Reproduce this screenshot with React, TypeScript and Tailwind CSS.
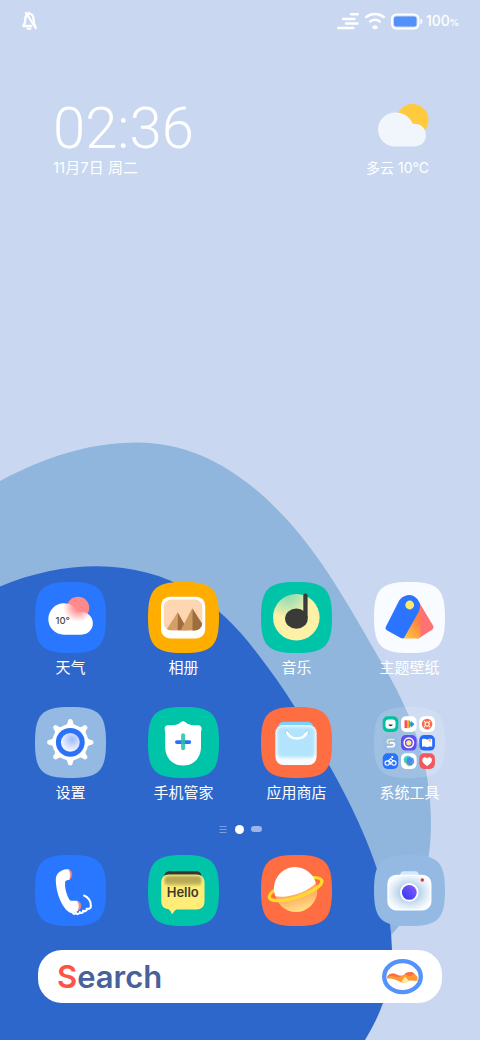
import type { ReactNode } from "react";

const SQUIRCLE = "M0 35.5C0 7 7 0 35.5 0S71 7 71 35.5 64 71 35.5 71 0 64 0 35.5Z";

function Tile({ fill, opacity = 1, children }: { fill: string; opacity?: number; children: ReactNode }) {
  return (
    <svg viewBox="0 0 71 71" className="block size-[71px]" aria-hidden="true">
      <path d={SQUIRCLE} fill={fill} fillOpacity={opacity} />
      {children}
    </svg>
  );
}

function WeatherIcon() {
  return (
    <Tile fill="#2977ff">
      <defs>
        <radialGradient id="w-glow" gradientUnits="userSpaceOnUse" cx="43" cy="25" r="15">
          <stop offset="0.3" stopColor="#ff9a9c" />
          <stop offset="0.75" stopColor="#ffdcdd" />
          <stop offset="1" stopColor="#ffffff" />
        </radialGradient>
      </defs>
      <circle cx="43" cy="26" r="11.2" fill="#ff8a8c" />
      <path d="M29 21.3c5.5 0 10.300 2.700 13.200 7.800 1.500.9 2.800.9 4.300.9a11.350 11.350 0 0 1 0 22.700H29a15.700 15.700 0 0 1 0-31.400Z" fill="url(#w-glow)" />
      <text x="20.500" y="41.500" fontSize="9.500" fontWeight="500" fill="#484848">10°</text>
    </Tile>
  );
}

function AlbumIcon() {
  return (
    <Tile fill="#ffae00">
      <defs>
        <clipPath id="al-clip"><rect x="15.700" y="17.500" width="38.600" height="31" rx="7.500" /></clipPath>
      </defs>
      <rect x="13" y="14.700" width="44.200" height="41.800" rx="9" fill="#fff" />
      <rect x="15.700" y="17.500" width="38.600" height="31" rx="7.500" fill="#ffd6b2" />
      <g clipPath="url(#al-clip)">
        <path d="M29.700 30.300 18 48.500h12Z" fill="#d3a06a" />
        <path d="M29.700 30.300 40 48.500H29.700Z" fill="#9d6d3b" />
        <path d="M44.300 26.300 32.500 48.500h12Z" fill="#cf9a60" />
        <path d="M44.300 26.300 57 46v3H44.300Z" fill="#9d6d3b" />
      </g>
    </Tile>
  );
}

function MusicIcon() {
  return (
    <Tile fill="#00c4a7">
      <defs>
        <radialGradient id="mu-g" gradientUnits="userSpaceOnUse" cx="27" cy="12" r="24">
          <stop offset="0" stopColor="#8adcb0" />
          <stop offset="0.450" stopColor="#b5e4b0" />
          <stop offset="1" stopColor="#fcf1a6" />
        </radialGradient>
      </defs>
      <circle cx="35.300" cy="35.300" r="23.300" fill="url(#mu-g)" />
      <ellipse cx="35.400" cy="36.600" rx="11.300" ry="10.200" fill="#3a3a38" />
      <path d="M42.300 13.700a2 2 0 0 1 4.300 0V36h-4.300Z" fill="#3a3a38" />
    </Tile>
  );
}

function ThemeIcon() {
  return (
    <Tile fill="#f8fbff">
      <defs>
        <linearGradient id="th-o" x1="0.800" y1="0" x2="0.200" y2="1">
          <stop offset="0.300" stopColor="#ff8145" />
          <stop offset="1" stopColor="#ffc23d" />
        </linearGradient>
      </defs>
      <path d="m45 20 14 23.500c1 1.800.5 3.300-1 4.200L46 55.600c-1 .7-2 .7-3 .7V22Z" fill="#fe7175" />
      <path d="M46.500 24v30.300c0 1.400-.8 2.200-2.200 2.200H29L39 32Z" fill="url(#th-o)" />
      <path d="M25.300 18.300a11.300 11.300 0 0 1 19.700 11L30.700 54.800c-.9 1.600-2.200 2-3.800 1.200l-13.700-7.600c-1.700-1-2.100-2.200-1.200-3.900Z" fill="#2b74ff" />
      <circle cx="35.700" cy="23" r="4.400" fill="#fde86a" />
    </Tile>
  );
}

function SettingsIcon() {
  return (
    <Tile fill="#94bae3">
      <defs>
        <radialGradient id="se-g" cx="0.600" cy="0.350" r="0.700">
          <stop offset="0" stopColor="#9fbcff" />
          <stop offset="0.900" stopColor="#f3f6ff" />
        </radialGradient>
      </defs>
      <circle cx="35.300" cy="35.300" r="18" fill="#fff" />
      {[0, 45, 90, 135, 180, 225, 270, 315].map((angle) => (
        <path
          key={angle}
          transform={`rotate(${angle} 35.300 35.300)`}
          d="M27.300 19.600c4-.9 5.400-2.500 5.600-5.500a2.500 2.500 0 0 1 4.900 0c.2 3 1.600 4.600 5.600 5.500Z"
          fill="#fff"
        />
      ))}
      <circle cx="35.300" cy="35.300" r="14.400" fill="#2b72f6" />
      <circle cx="35.300" cy="35.300" r="9.400" fill="url(#se-g)" />
    </Tile>
  );
}

function SecurityIcon() {
  return (
    <Tile fill="#00c4a7">
      <path d="M32.700 15.300c1.500-1.300 3.300-1.300 4.800 0 2.500 2.200 5 3 8.500 3h4c2.300 0 3.600 1.300 3.600 3.600 0 1.300-.6 2-.6 3.300V40c0 10.500-7.200 18.600-17.900 18.600S17.200 50.500 17.200 40V25.200c0-1.300-.6-2-.6-3.300 0-2.300 1.300-3.600 3.600-3.600h4c3.500 0 6-.8 8.500-3Z" fill="#fff" />
      <rect x="27" y="33.200" width="16.200" height="3.800" rx="1.900" fill="#2c70f4" />
      <rect x="33.100" y="26.200" width="4" height="17" rx="2" fill="#22c2a4" fillOpacity="0.850" />
    </Tile>
  );
}

function StoreIcon() {
  return (
    <Tile fill="#ff6d43">
      <defs>
        <filter id="st-b" x="-20%" y="-20%" width="140%" height="140%"><feGaussianBlur stdDeviation="1.600" /></filter>
      </defs>
      <path d="M17 21c0-4 2.500-6.300 6.500-6.300h23c4 0 5.700 2.300 5.700 6.300Z" fill="#76d2f9" />
      <rect x="14.400" y="18" width="41.200" height="40" rx="8" fill="#f8fdff" />
      <rect x="16" y="19.500" width="38" height="31" rx="5" fill="#b3e4fd" filter="url(#st-b)" />
      <circle cx="26" cy="25.500" r="2" fill="#91c9e8" />
      <circle cx="46" cy="25.500" r="2" fill="#91c9e8" />
      <path d="M26 25.500c4 8 16 8 20 0" fill="none" stroke="#fff" strokeWidth="2.600" strokeLinecap="round" />
    </Tile>
  );
}

function Mini({ x, y, fill, children }: { x: number; y: number; fill: string; children: ReactNode }) {
  return (
    <g transform={`translate(${x} ${y})`}>
      <rect width="15.600" height="15.600" rx="4.800" fill={fill} />
      {children}
    </g>
  );
}

function ToolsIcon() {
  return (
    <Tile fill="#ffffff" opacity={0.14}>
      <Mini x={8.7} y={9.3} fill="#00c2a0">
        <rect x="2.800" y="3.200" width="10" height="9.300" rx="3" fill="#fff" />
        <path d="M5.800 8.300h4.200c-.3 2.200-3.900 2.200-4.200 0Z" fill="#2c3d3b" />
      </Mini>
      <Mini x={27} y={9.3} fill="#fff">
        <path d="M3.500 4h3v7.800h-3Z" fill="#fc4f59" />
        <path d="M6 4h2.500v7.800H6Z" fill="#ffb52b" />
        <path d="M8 3.800 11 8l-3 4Z" fill="#27c6a2" />
        <path d="M9.800 4.500 13.500 8l-3.700 3.500Z" fill="#2a8bff" />
      </Mini>
      <Mini x={45.3} y={9.3} fill="#fff">
        <circle cx="7.800" cy="7.800" r="5.300" fill="#fc6b45" />
        <circle cx="7.800" cy="7.800" r="2.100" fill="#fc6b45" stroke="#fff" strokeWidth="1.100" />
        {[45, 135, 225, 315].map((a) => (
          <circle key={a} cx="7.800" cy="4.100" r="0.700" fill="#fff" transform={`rotate(${a} 7.800 7.800)`} />
        ))}
      </Mini>
      <Mini x={8.7} y={28} fill="#9abde4">
        <path d="M11.800 4.500H6.800c-1.800 0-2.300.9-2.300 2.200 0 1 .6 1.500 1.600 1.500" fill="none" stroke="#fbe79c" strokeWidth="1.600" />
        <path d="M4.200 11.800h5.200c1.800 0 2.300-.9 2.300-2.200 0-1.100-.7-1.700-1.800-1.700H7" fill="none" stroke="#fff" strokeWidth="1.600" />
      </Mini>
      <Mini x={27} y={28} fill="#654df1">
        <circle cx="7.800" cy="7.800" r="4.700" fill="#654df1" stroke="#fff" strokeWidth="1.500" />
        <circle cx="7.800" cy="7.800" r="2.600" fill="#ffe98d" />
      </Mini>
      <Mini x={45.3} y={28} fill="#256bfb">
        <path d="M2.700 4.300c2-.8 3.800-.6 5.100.4 1.300-1 3.100-1.200 5.100-.4v7.500c-2-.6-3.800-.5-5.100.4-1.300-.9-3.100-1-5.100-.4Z" fill="#fff" />
        <path d="M9.400 3.700h2v3L10.400 6 9.400 6.700Z" fill="#ffad3d" />
      </Mini>
      <Mini x={8.7} y={46.3} fill="#2873fb">
        <g fill="none" stroke="#fff" strokeWidth="1.100" strokeLinecap="round" strokeLinejoin="round">
          <circle cx="4.500" cy="9.800" r="2.200" />
          <circle cx="11.200" cy="9.800" r="2.200" />
          <path d="m7.800 11 .3-2-2.300-1.700 2.400-2.100 1.500 2h1.500" />
        </g>
        <circle cx="9.600" cy="3.800" r="1.100" fill="#fff" />
      </Mini>
      <Mini x={27} y={46.3} fill="#fff">
        <circle cx="6.800" cy="6.600" r="4.200" fill="#48cfc0" />
        <path d="M4.800 9.500c.5 3.800 4.800 4.500 6.500 2L8 7Z" fill="#91d552" />
        <circle cx="9.300" cy="7.900" r="3.900" fill="#3f82f3" fillOpacity="0.850" />
      </Mini>
      <Mini x={45.3} y={46.3} fill="#ef5a61">
        <path d="M7.800 12.600C5 10.800 3 9 3 6.600c0-2.700 3.400-3.500 4.800-1.200 1.400-2.300 4.800-1.500 4.800 1.200 0 2.400-2 4.200-4.800 6Z" fill="#fff" />
      </Mini>
    </Tile>
  );
}

function PhoneIcon() {
  return (
    <Tile fill="#2977ff">
      <path d="M27 15.400c2.700-1.300 5.500-1.300 7.500-.6 1.700 2.500 1.600 6.200.3 9.700-1 .8-4.300.2-4.600 2.500-.8 6 1.600 13.500 4.300 17.700 1.300 2 4.500.5 8.200 1.300 1.800 2.700 1.900 6.500.3 9.700-1.800 1.500-4.700 2.500-7.300 2.300C28.500 55 21 40 20.800 25c0-5 2.300-7.900 6.200-9.600Z" fill="#fff" />
      <path d="M33.800 14.700c3.600.8 4 6.600.8 9.800 1.300-3.500 1.200-7-.8-9.800ZM42.500 46c4.200 1.300 4.500 7.500.6 9.600 1.500-3 1.400-6.500-.6-9.600Z" fill="#ff837f" stroke="#ff837f" strokeWidth="0.600" />
      <path d="M37.500 57.600c1.500 2.400 3.300.9 3.300-.3.900 2.600 3.600 2.200 4-.2 1.200 1.600 3.600.8 3.300-1.400 2 1.200 4.300-.2 3.500-2 2.700.7 4.600-.8 4.200-2.800.6-4.400-2.700-8.800-6.700-10.300" fill="none" stroke="#fff" strokeWidth="2.100" strokeLinecap="round" strokeLinejoin="round" />
    </Tile>
  );
}

function MessagesIcon() {
  return (
    <Tile fill="#00c4a7">
      <defs>
        <linearGradient id="ms-g" gradientUnits="userSpaceOnUse" x1="0" y1="20" x2="0" y2="33">
          <stop offset="0" stopColor="#b3a757" />
          <stop offset="0.550" stopColor="#b8ab58" />
          <stop offset="1" stopColor="#ffed78" />
        </linearGradient>
        <filter id="ms-b" x="-20%" y="-30%" width="140%" height="160%"><feGaussianBlur stdDeviation="1" /></filter>
      </defs>
      <path d="M16.200 22c0-3.600 2-5.700 5.500-5.700h26.500c3.300 0 5.300 2.100 5.300 5.700Z" fill="#333632" />
      <path d="M21.300 19.500h27c5.300 0 8.200 3 8.200 8.200v18.500c0 5.200-3 8.200-8.200 8.200H28.600c-1.500.3-2.500 2-3.600 3.800-.5.700-1.200.7-1.600 0-.8-1.800-1.500-3.400-3.400-4.100-4.300-.5-6.700-3.300-6.700-7.900V27.700c0-5.200 2.700-8.200 8-8.200Z" fill="#ffed78" />
      <rect x="16.500" y="21" width="37" height="10" rx="4" fill="url(#ms-g)" filter="url(#ms-b)" />
      <text x="18.700" y="42.300" fontSize="13" fontWeight="600" fill="#3d3b2d">Hello</text>
    </Tile>
  );
}

function BrowserIcon() {
  return (
    <Tile fill="#ff6d43">
      <defs>
        <linearGradient id="br-g" gradientUnits="userSpaceOnUse" x1="33" y1="42" x2="37" y2="57">
          <stop offset="0" stopColor="#ffad66" />
          <stop offset="1" stopColor="#ffe184" />
        </linearGradient>
      </defs>
      <ellipse cx="34.600" cy="34" rx="27.500" ry="8.300" transform="rotate(-18 34.600 34)" fill="none" stroke="#ffda2e" strokeWidth="3" />
      <circle cx="35" cy="35.700" r="21.300" fill="url(#br-g)" />
      <path d="M14.300 41A21.300 21.300 0 1 1 54.800 28c-8 9-28 16-40.500 13Z" fill="#fff" />
      <path d="M8.300 42.500a27.500 8.300 -18 0 0 52.500-17" fill="none" stroke="#ffda2e" strokeWidth="3.100" strokeLinecap="round" />
    </Tile>
  );
}

function CameraIcon() {
  return (
    <Tile fill="#94bae3">
      <defs>
        <radialGradient id="ca-g" cx="0.500" cy="0.500" r="0.550">
          <stop offset="0.300" stopColor="#a9cae9" />
          <stop offset="0.700" stopColor="#dce9f6" />
          <stop offset="1" stopColor="#fafcff" />
        </radialGradient>
        <linearGradient id="ca-l" x1="1" y1="0" x2="0" y2="1">
          <stop offset="0" stopColor="#895ff7" />
          <stop offset="1" stopColor="#3035f5" />
        </linearGradient>
      </defs>
      <path d="M26 20c.7-2.400 1.500-3.700 3.500-3.700h12c2 0 2.800 1.300 3.500 3.700Z" fill="#d7e8f8" />
      <rect x="14" y="20.300" width="42.800" height="34.600" rx="8.500" fill="url(#ca-g)" stroke="#fff" strokeWidth="1.300" />
      <circle cx="35.300" cy="37.400" r="9.300" fill="#fff" />
      <circle cx="35.300" cy="37.400" r="7.400" fill="url(#ca-l)" />
      <circle cx="48.300" cy="25" r="1.700" fill="#ed2d3b" />
    </Tile>
  );
}

const APPS = [
  { name: "天气", icon: <WeatherIcon /> },
  { name: "相册", icon: <AlbumIcon /> },
  { name: "音乐", icon: <MusicIcon /> },
  { name: "主题壁纸", icon: <ThemeIcon /> },
  { name: "设置", icon: <SettingsIcon /> },
  { name: "手机管家", icon: <SecurityIcon /> },
  { name: "应用商店", icon: <StoreIcon /> },
  { name: "系统工具", icon: <ToolsIcon /> },
];

const DOCK = [
  { name: "电话", icon: <PhoneIcon /> },
  { name: "信息", icon: <MessagesIcon /> },
  { name: "浏览器", icon: <BrowserIcon /> },
  { name: "相机", icon: <CameraIcon /> },
];

function Wallpaper() {
  return (
    <svg viewBox="0 0 480 1040" preserveAspectRatio="none" className="absolute inset-0 -z-10 size-full" aria-hidden="true">
      <path d="M0 481C45 457 90 442.500 137 442.500C205 442.500 258 484 300 534.700C330 571 357 620 383 665C413 716 431 765 431 823C431 868 420 905 392 934L300 1040H0Z" fill="#90b6dd" />
      <path d="M0 586.500C32 573 65 566.300 97 566.300C170 566.300 220 603 257 653C285 689 305 722 328 763C350 802 392 880 392 950C392 985 382 1012 365 1040H0Z" fill="#2e67cc" />
    </svg>
  );
}

function StatusBar() {
  return (
    <header className="flex h-[42px] items-center justify-between pr-[21px] pl-[22px]">
      <svg viewBox="0 0 15 20" className="h-5 w-[15px]" fill="none" stroke="#fff" aria-label="静音">
        <path d="M4.300 4.300C3 6 3.300 9 3 11.500L1.300 15h8M6.500 3c3.800-.8 5 2.500 5 5 0 2.700.3 4.500 1.800 7.500" strokeWidth="2.300" strokeLinejoin="round" strokeLinecap="round" />
        <path d="M4 2 13.700 17M6.800 1.500v1.500" strokeWidth="2.200" strokeLinecap="round" />
        <path d="M5.500 17.800h3" strokeWidth="2" strokeLinecap="round" />
      </svg>
      <div className="flex items-center">
        <svg viewBox="0 0 22 18" className="h-[18px] w-[22px]" stroke="#fff" strokeWidth="2.400" strokeLinecap="round" aria-hidden="true">
          <path d="M14 2.300h6.800M6 7h11.500M9 11.500h11.500M1.300 16h15" />
        </svg>
        <svg viewBox="0 0 20 18" className="ml-[6px] h-[18px] w-5" fill="none" stroke="#fff" strokeWidth="2.500" strokeLinecap="round" aria-hidden="true">
          <path d="M1.300 5C6 .900 14 .900 18.700 5M5.300 9.500c3-2.200 6.400-2.200 9.400 0" />
          <ellipse cx="10" cy="15.300" rx="1.500" ry="0.700" />
        </svg>
        <svg viewBox="0 0 32 17" className="ml-[6px] h-[17px] w-8" aria-hidden="true">
          <rect x="1" y="1.500" width="26.500" height="14" rx="4.500" fill="none" stroke="#fff" strokeWidth="2" />
          <rect x="3" y="3.500" width="22.500" height="10" rx="2.500" fill="#5490fb" />
          <path d="M30 6.300c1.300 1.300 1.300 3.100 0 4.400Z" fill="#fff" stroke="#fff" />
        </svg>
        <span className="ml-[3px] flex items-baseline pt-[1px] text-[14px] leading-5 font-medium">
          100<span className="text-[9px] font-bold">%</span>
        </span>
      </div>
    </header>
  );
}

function Clock() {
  return (
    <section className="mt-[62px] flex items-end justify-between pr-[51px] pl-[53px]">
      <div>
        <time className="block font-[Roboto,sans-serif] text-[58px] leading-[48px] font-light">02:36</time>
        <p className="mt-[6px] text-[15px] leading-5">11月7日 周二</p>
      </div>
      <div className="flex flex-col items-end">
        <svg viewBox="0 0 52 44" className="h-11 w-[52px]" aria-hidden="true">
          <circle cx="35.500" cy="16" r="16" fill="#ffca3c" />
          <path d="M18 8.500c8.500 0 15 4.500 17.800 11.300 7.500-.5 13.200 4.200 13.200 11.200 0 6.500-4.700 11.500-12 11.500H18a17 17 0 0 1 0-34Z" fill="#f1f6fd" />
        </svg>
        <p className="mt-[10px] text-[14px] leading-5">多云 10℃</p>
      </div>
    </section>
  );
}

function SearchBar() {
  return (
    <form role="search" className="mx-[38px] mt-6 flex h-[53px] items-center rounded-[24px] bg-white pr-[18px] pl-[19px]">
      <label htmlFor="q" className="text-[31px] leading-9 font-semibold text-[#48619a]">
        <span className="text-[#ff5347]">S</span>earch
      </label>
      <input id="q" type="search" className="h-9 min-w-0 flex-1 bg-transparent px-2 text-base text-[#48619a] outline-none" />
      <button type="button" aria-label="语音助手">
        <svg viewBox="0 0 42 36" className="h-9 w-[42px]" aria-hidden="true">
          <ellipse cx="20.500" cy="17.700" rx="18.300" ry="15.500" fill="#fff" stroke="#5692fb" strokeWidth="4.300" />
          <path d="M5 18c2-3.500 6-4.300 9.500-2.600 3 1.400 5.500 2 8-.2 3-2.600 7.500-3.200 10-.4l3 3v4c-4 .5-6-1-9 .3-3 1.800-5 2.700-8.500.7C13.500 20.300 9.500 19 5 19.500Z" fill="#ff9a35" />
          <path d="M5 18c2-3.500 6-4.300 9.500-2.600 2 .9 3.500 1.600 5 1.200-1.500 1.800-3.500 2-5.500 1.200-3-1.200-5-1.200-9 .2ZM22.500 15.200c3-2.600 7.500-3.200 10-.4l-4.500 2.400Z" fill="#fb6d4d" />
          <path d="m23 17.500 4.500 5c-2 1.500-5 2.500-8 .3Z" fill="#ffeaa0" />
        </svg>
      </button>
    </form>
  );
}

export default function App() {
  return (
    <main className="relative isolate flex min-h-screen flex-col overflow-hidden bg-[#c9d8f0] pb-[37px] font-[Inter,'Noto_Sans_CJK_SC',sans-serif] text-white">
      <Wallpaper />
      <StatusBar />
      <Clock />
      <nav aria-label="应用" className="mt-auto grid grid-cols-4 gap-y-[29px] px-[14px]">
        {APPS.map((app) => (
          <button key={app.name} type="button" className="flex flex-col items-center">
            {app.icon}
            <span className="mt-[5px] text-[15px] leading-5">{app.name}</span>
          </button>
        ))}
      </nav>
      <div className="mt-[19px] flex h-[14px] items-center justify-center pl-[1px]" aria-hidden="true">
        <svg viewBox="0 0 8 8" className="mr-2 size-2" stroke="#7c9fe0" strokeWidth="1">
          <path d="M.5 1.500h7M.5 4.500h7M.5 7.500h7" />
        </svg>
        <span className="size-[9px] rounded-full bg-white" />
        <span className="ml-[7px] h-[6px] w-[11px] rounded-full bg-[#9db5e8]" />
      </div>
      <nav aria-label="快捷栏" className="mt-[19px] grid grid-cols-4 px-[14px]">
        {DOCK.map((app) => (
          <button key={app.name} type="button" aria-label={app.name} className="flex flex-col items-center">
            {app.icon}
          </button>
        ))}
      </nav>
      <SearchBar />
    </main>
  );
}
